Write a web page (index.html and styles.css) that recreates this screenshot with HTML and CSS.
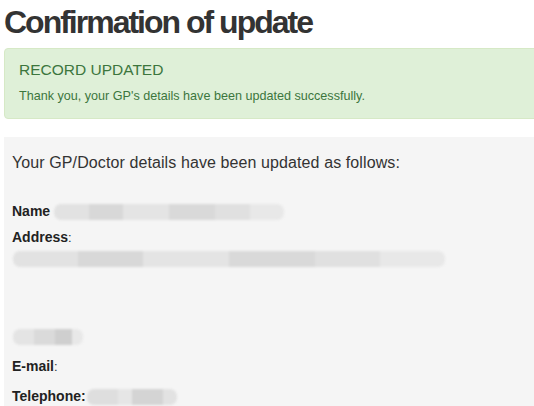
FILE: index.html
```html
<!DOCTYPE html>
<html lang="en">
<head>
    <meta charset="UTF-8">
    <meta name="viewport" content="width=device-width, initial-scale=1.0">
    <title>Confirmation of update</title>
    <link rel="stylesheet" href="styles.css">
</head>
<body>
    <div class="page">
        <h1 class="title">Confirmation of update</h1>

        <!-- Mensagem de sucesso -->
        <div class="alert alert-success">
            <h2 class="alert-title">RECORD UPDATED</h2>
            <p class="alert-text">Thank you, your GP's details have been updated successfully.</p>
        </div>

        <!-- Detalhes do GP -->
        <div class="panel">
            <p class="lead">Your GP/Doctor details have been updated as follows:</p>
            <p class="field field-name"><strong>Name</strong> <span class="redacted redacted-name"></span></p>
            <div class="field field-address">
                <strong>Address</strong>:
                <div class="address-lines">
                    <div class="address-line"><span class="redacted redacted-addr"></span></div>
                    <div class="address-line"></div>
                    <div class="address-line"></div>
                    <div class="address-line"></div>
                    <div class="address-line"><span class="redacted redacted-postcode"></span></div>
                </div>
            </div>
            <p class="field field-email"><strong>E-mail</strong>:</p>
            <p class="field field-tel"><strong>Telephone:</strong><span class="redacted redacted-tel"></span></p>
        </div>
    </div>
</body>
</html>
```

FILE: styles.css
```css
/* Estilo Global */
html, body {
    overflow: hidden;
}

body {
    font-family: 'Liberation Sans', Arial, sans-serif;
    margin: 0;
    padding: 0;
    color: #333;
    background: #fff;
}

.page {
    padding: 0 0 0 4px;
    margin-right: -30px;
}

.title {
    font-size: 32px;
    line-height: 35px;
    font-weight: bold;
    letter-spacing: -2px;
    margin: 5px 0 8px;
    color: #333;
}

.alert {
    border: 1px solid #d6e9c6;
    border-radius: 4px;
    padding: 11px 14px 13px;
}

.alert-success {
    background: #dff0d8;
    color: #3c763d;
}

.alert-title {
    font-size: 15.5px;
    line-height: 20px;
    font-weight: normal;
    margin: 0;
}

.alert-text {
    font-size: 12.6px;
    line-height: 18px;
    margin: 7px 0 0;
}

.panel {
    margin-top: 18px;
    background: #f5f5f5;
    padding: 13.5px 8px 30px;
    font-size: 13px;
    line-height: 19.5px;
}

.lead {
    font-size: 16px;
    line-height: 24px;
    letter-spacing: 0.1px;
    margin: 0;
}

.field {
    margin: 0;
}

.field strong {
    font-size: 14px;
    color: #222;
}

.field-name {
    margin-top: 27px;
}

.field-address {
    margin-top: 6.5px;
}

.address-lines {
    margin-top: 2px;
}

.address-line {
    height: 19.5px;
    display: flex;
    align-items: center;
}

.field-email {
    margin-top: 10px;
}

.field-tel {
    margin-top: 10.5px;
}

/* Dados ocultados */
.redacted {
    display: inline-block;
    height: 16px;
    vertical-align: -4px;
    border-radius: 7px;
    filter: blur(0.8px);
    background: linear-gradient(90deg, #e2e2e2 0%, #e2e2e2 15%, #d8d8d8 15%, #d8d8d8 30%, #e4e4e4 30%, #e4e4e4 50%, #d9d9d9 50%, #d9d9d9 70%, #e0e0e0 70%, #e0e0e0 85%, #e8e8e8 85%);
}

.redacted-name {
    width: 230px;
}

.redacted-addr {
    width: 432px;
    margin-left: 1px;
}

.redacted-postcode {
    width: 70px;
    margin-left: 1px;
    background: linear-gradient(90deg, #e4e4e4 0%, #e4e4e4 30%, #dadada 30%, #dadada 60%, #cfcfcf 60%, #cfcfcf 85%, #e8e8e8 85%);
}

.redacted-tel {
    width: 90px;
    margin-left: 1px;
    background: linear-gradient(90deg, #dedede 0%, #dedede 35%, #e6e6e6 35%, #e6e6e6 50%, #d4d4d4 50%, #d4d4d4 85%, #e2e2e2 85%);
}
```
